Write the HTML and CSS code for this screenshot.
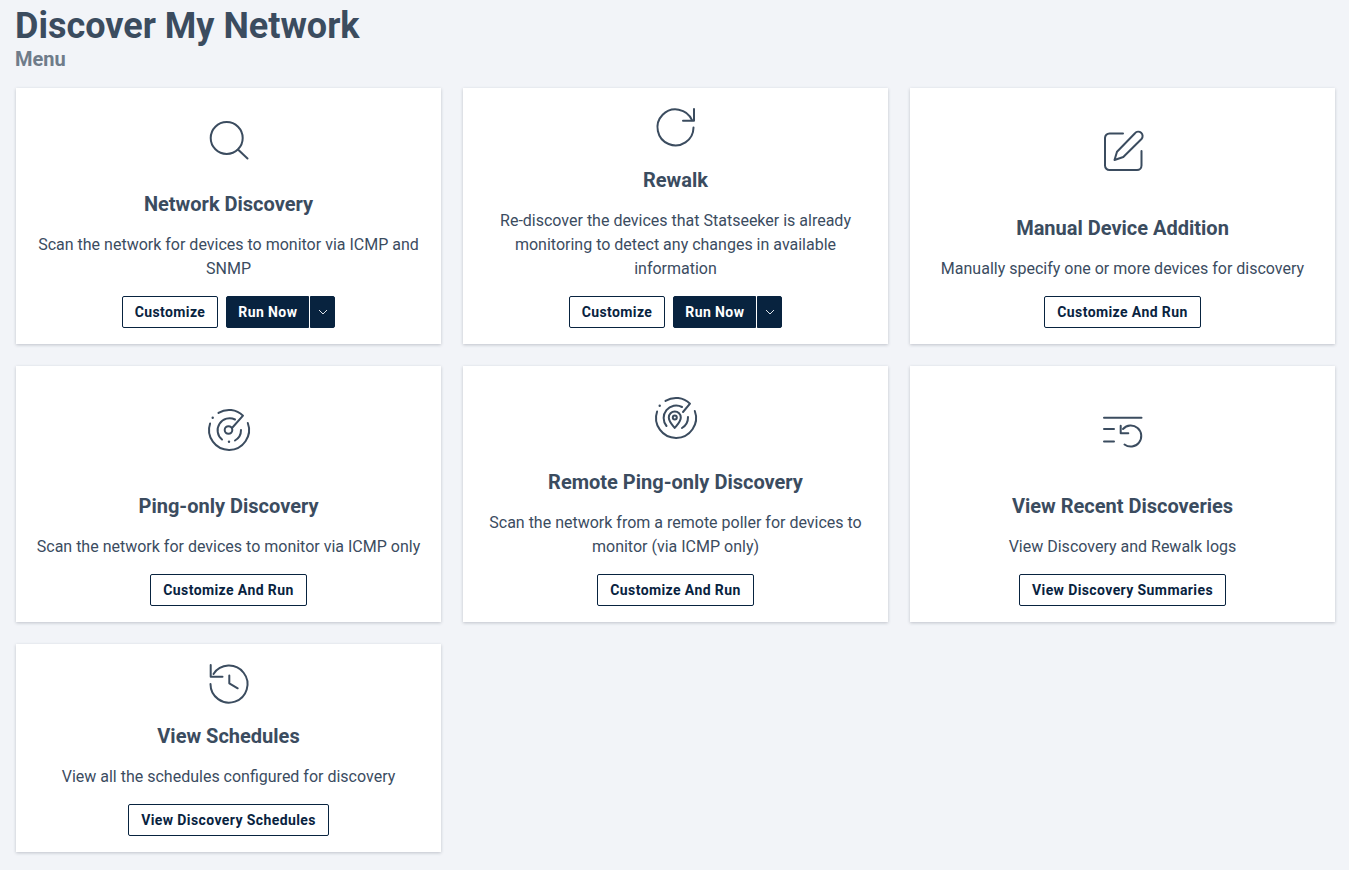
FILE: index.html
```html
<!DOCTYPE html>
<html lang="en">
<head>
<meta charset="utf-8">
<title>Discover My Network</title>
<link rel="stylesheet" href="styles.css">
</head>
<body>
<header class="page-head">
  <h1 class="page-title">Discover My Network</h1>
  <h2 class="page-sub">Menu</h2>
</header>
<main class="grid">
  <section class="card">
    <div class="icon-wrap"><svg class="icon" viewBox="0 0 48 48"><circle cx="21.7" cy="23" r="16"/><path d="M33.5 35L42.5 43.5"/></svg></div>
    <h3 class="card-title">Network Discovery</h3>
    <p class="card-desc">Scan the network for devices to monitor via ICMP and SNMP</p>
    <div class="actions">
      <button class="btn">Customize</button>
      <div class="split">
        <button class="btn btn-dark btn-main">Run Now</button>
        <button class="btn btn-dark btn-caret"><svg class="caret" viewBox="0 0 10 6"><path d="M1 1L5 5L9 1"/></svg></button>
      </div>
    </div>
  </section>
  <section class="card">
    <div class="icon-wrap"><svg class="icon" viewBox="0 0 48 48"><path d="M40 17.200A18 18 0 1 0 41.500 24.500"/><path d="M42 6V17.700H31"/></svg></div>
    <h3 class="card-title">Rewalk</h3>
    <p class="card-desc">Re-discover the devices that Statseeker is already monitoring to detect any changes in available information</p>
    <div class="actions">
      <button class="btn">Customize</button>
      <div class="split">
        <button class="btn btn-dark btn-main">Run Now</button>
        <button class="btn btn-dark btn-caret"><svg class="caret" viewBox="0 0 10 6"><path d="M1 1L5 5L9 1"/></svg></button>
      </div>
    </div>
  </section>
  <section class="card">
    <div class="icon-wrap"><svg class="icon" viewBox="0 0 48 48"><path d="M24 6.500H10.500A4.500 4.500 0 0 0 6 11V38.500A4.500 4.500 0 0 0 10.500 43H38A4.500 4.500 0 0 0 42.500 38.500V24"/><path d="M15.500 33L18 24.700L36 6.200A4.200 4.200 0 0 1 42.500 12L24.300 30Z"/></svg></div>
    <h3 class="card-title">Manual Device Addition</h3>
    <p class="card-desc">Manually specify one or more devices for discovery</p>
    <div class="actions"><button class="btn">Customize And Run</button></div>
  </section>
  <section class="card">
    <div class="icon-wrap"><svg class="icon" viewBox="0 -1 48 48"><path d="M5.100 17.500A20 20 0 1 0 42.800 17"/><path d="M13.500 6.900A20 20 0 0 1 38 9.700L27 22"/><circle cx="23.500" cy="24" r="3.800"/><path d="M17 33.500A12 12 0 0 1 30 13.500"/><path d="M36 24A12 12 0 0 1 30 34.500"/><circle class="dot" cx="7.700" cy="11.700" r="1.200"/><circle class="dot" cx="24" cy="35.700" r="1.200"/></svg></div>
    <h3 class="card-title">Ping-only Discovery</h3>
    <p class="card-desc">Scan the network for devices to monitor via ICMP only</p>
    <div class="actions"><button class="btn">Customize And Run</button></div>
  </section>
  <section class="card">
    <div class="icon-wrap"><svg class="icon" viewBox="0 -1 48 48"><path d="M5.100 17.500A20 20 0 1 0 42.800 17"/><path d="M13.500 6.900A20 20 0 0 1 38 9.700L31 18"/><path d="M22.700 34C20 30.500 16.800 27.500 16.800 23.500A6 6 0 0 1 28.800 23.500C28.800 27.500 25.500 30.500 22.700 34Z"/><circle cx="22.800" cy="23.500" r="2"/><path d="M14.500 32A12.500 12.500 0 0 1 30 13"/><path d="M36 23A12.500 12.500 0 0 1 30 34"/><circle class="dot" cx="7.700" cy="11.700" r="1.200"/></svg></div>
    <h3 class="card-title">Remote Ping-only Discovery</h3>
    <p class="card-desc">Scan the network from a remote poller for devices to monitor (via ICMP only)</p>
    <div class="actions"><button class="btn">Customize And Run</button></div>
  </section>
  <section class="card">
    <div class="icon-wrap"><svg class="icon" viewBox="0 0 48 48"><path d="M5 12.700H42.500"/><path d="M5 24H15"/><path d="M5 36.500H15"/><path d="M24 24A10.500 10.500 0 1 1 25.500 39.500"/><path d="M21.700 20.700V28.300H29.300"/></svg></div>
    <h3 class="card-title">View Recent Discoveries</h3>
    <p class="card-desc">View Discovery and Rewalk logs</p>
    <div class="actions"><button class="btn">View Discovery Summaries</button></div>
  </section>
  <section class="card">
    <div class="icon-wrap"><svg class="icon" viewBox="0 -1 48 48"><path d="M8.500 14A18.500 18.500 0 1 1 5.500 24"/><path d="M5.700 5V16.700H17.500"/><path d="M24.300 15.500V23.300L32.700 28.300"/></svg></div>
    <h3 class="card-title">View Schedules</h3>
    <p class="card-desc">View all the schedules configured for discovery</p>
    <div class="actions"><button class="btn">View Discovery Schedules</button></div>
  </section>
</main>
</body>
</html>
```
FILE: styles.css
```css
* { box-sizing: border-box; }
html, body { margin: 0; padding: 0; }
body {
  background: #f2f4f8;
  font-family: Roboto, "Liberation Sans", sans-serif;
  color: #3b4c5f;
  height: 870px;
  overflow: hidden;
}
.page-head { padding: 5px 15px 0; height: 88px; }
.page-title {
  margin: 0;
  font-size: 36px;
  line-height: 42px;
  font-weight: 700;
  color: #3b4c5f;
}
.page-sub {
  margin: 0;
  font-size: 20px;
  line-height: 24px;
  font-weight: 700;
  color: #6f7c8a;
}
.grid {
  display: grid;
  grid-template-columns: repeat(3, 425px);
  grid-template-rows: 256px 256px 208px;
  column-gap: 22px;
  row-gap: 22px;
  padding: 0 16px;
}
.card {
  background: #fff;
  padding: 16px;
  display: flex;
  flex-direction: column;
  align-items: center;
  text-align: center;
  box-shadow: 0 1px 3px rgba(60, 70, 85, 0.28);
}
.icon-wrap {
  flex: 1;
  min-height: 0;
  display: flex;
  align-items: center;
  justify-content: center;
  margin-bottom: 16px;
}
.icon {
  width: 48px;
  height: 48px;
  display: block;
  fill: none;
  stroke: #3b4c5f;
  stroke-width: 2;
  stroke-linecap: round;
  stroke-linejoin: round;
  flex: none;
}
.icon .dot { fill: #3b4c5f; stroke: none; }
.card-title {
  margin: 0;
  font-size: 20px;
  line-height: 28px;
  font-weight: 700;
  color: #3b4c5f;
}
.card-desc {
  margin: 15px 0 0;
  font-size: 16px;
  line-height: 24px;
  color: #3b4c5f;
}
.actions {
  margin-top: 15px;
  display: flex;
  justify-content: center;
  gap: 8px;
}
.btn {
  height: 32px;
  padding: 0 12px;
  border: 1px solid #08233f;
  border-radius: 2px;
  background: #fff;
  color: #08233f;
  font-family: Roboto, "Liberation Sans", sans-serif;
  font-size: 14px;
  font-weight: 700;
  letter-spacing: 0.4px;
  white-space: nowrap;
}
.split { display: flex; gap: 1px; }
.btn-dark { background: #08233f; color: #fff; }
.btn-main { border-radius: 2px 0 0 2px; padding: 0 11px; }
.btn-caret {
  border-radius: 0 2px 2px 0;
  padding: 0;
  width: 25px;
  display: flex;
  align-items: center;
  justify-content: center;
}
.caret {
  width: 10px;
  height: 6px;
  fill: none;
  stroke: #dfe4ea;
  stroke-width: 1;
}
```
